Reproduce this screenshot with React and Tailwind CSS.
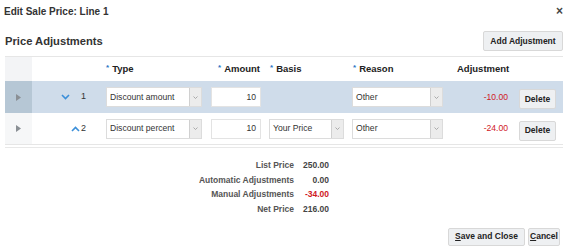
import React from "react";

function Chevron({ dir }) {
    return (
        <svg width="9" height="6" viewBox="0 0 9 6" className="block">
            {dir === "down" ? (
                <path d="M1 1 L4.5 4.5 L8 1" fill="none" stroke="#3b8fd9" strokeWidth="1.6" />
            ) : (
                <path d="M1 5 L4.5 1.5 L8 5" fill="none" stroke="#3b8fd9" strokeWidth="1.6" />
            )}
        </svg>
    );
}

function Select({ value, width }) {
    return (
        <div className={`flex h-[20px] ${width} border border-[#dcdcdc] bg-white`}>
            <div className="flex-1 flex items-center pl-[3px] text-[8.6px] text-[#333]">{value}</div>
            <div className="w-[12px] flex items-center justify-center bg-[#ececec] border-l border-[#d0d0d0]">
                <svg width="5" height="3" viewBox="0 0 5 3">
                    <path d="M0.5 0.5 L2.5 2.5 L4.5 0.5" fill="none" stroke="#999" strokeWidth="0.8" />
                </svg>
            </div>
        </div>
    );
}

function Star() {
    return <span className="text-[#2a74c4] text-[8px] relative -top-[2px] mr-[3px]">*</span>;
}

function DeleteButton() {
    return (
        <button className="h-[20px] w-[37px] rounded-[2px] border border-[#d8d8d8] bg-[#eef0f2] text-[8.5px] font-bold text-[#222]">
            Delete
        </button>
    );
}

function Row({ selected, rowNum, dir, type, basis, adjustment }) {
    return (
        <div className={`flex h-[32px] items-center ${selected ? "bg-[#cfdcea]" : "bg-white border-b border-[#e6e6e6]"}`}>
            <div className={`w-[27px] h-full flex items-center justify-center ${selected ? "bg-[#b6c7d5]" : "bg-[#f6f7f8]"}`}>
                <svg width="5" height="7" viewBox="0 0 5 7">
                    <path d="M0 0 L5 3.5 L0 7 Z" fill="#8a8f94" />
                </svg>
            </div>
            <div className="w-[74px] h-full flex items-center justify-end pr-[20px] gap-[1px] text-[9px] text-[#333]">
                {dir === "down" ? (
                    <>
                        <span className="mr-[10px]"><Chevron dir="down" /></span>
                        <span>{rowNum}</span>
                    </>
                ) : (
                    <>
                        <Chevron dir="up" />
                        <span>{rowNum}</span>
                    </>
                )}
            </div>
            <div className="w-[105px]">
                <Select value={type} width="w-[96px]" />
            </div>
            <div className="w-[58px]">
                <div className="h-[20px] w-[50px] border border-[#e3e3e3] bg-white flex items-center justify-end pr-[4px] text-[8.6px] text-[#333]">
                    10
                </div>
            </div>
            <div className="w-[83px]">
                {basis && <Select value={basis} width="w-[75px]" />}
            </div>
            <div className="w-[100px]">
                <Select value="Other" width="w-[91px]" />
            </div>
            <div className="w-[61px] text-right pr-[5px] text-[8.6px] text-[#d0191f]">{adjustment}</div>
            <div className="w-[50px] pl-[6px]">
                <DeleteButton />
            </div>
        </div>
    );
}

export default function App() {
    const summary = [
        { label: "List Price", value: "250.00" },
        { label: "Automatic Adjustments", value: "0.00" },
        { label: "Manual Adjustments", value: "-34.00", red: true },
        { label: "Net Price", value: "216.00" },
    ];

    return (
        <div className="w-[571px] h-[249px] bg-white font-['Liberation_Sans',Arial,sans-serif] text-[#333] overflow-hidden">
            {/* Title */}
            <div className="h-[22px] flex items-center justify-between pl-[4px] pr-[8px]">
                <span className="text-[10px] font-bold text-[#333]">Edit Sale Price: Line 1</span>
                <span className="text-[12px] font-bold text-[#444] leading-none">×</span>
            </div>

            {/* Section header */}
            <div className="h-[30px] flex items-center justify-between pl-[5px] pr-[8px] pt-[8px]">
                <span className="text-[11.2px] font-bold text-[#333]">Price Adjustments</span>
                <button className="h-[20px] w-[80px] rounded-[2px] border border-[#d8d8d8] bg-[#eef0f2] text-[8.5px] font-bold text-[#222]">
                    Add Adjustment
                </button>
            </div>

            {/* Table */}
            <div className="mt-[4px] ml-[5px] w-[558px] border-t border-[#e6e6e6]">
                <div className="flex h-[24px] items-center text-[9.5px] font-bold text-[#222]">
                    <div className="w-[27px] h-full bg-[#f3f4f6]" />
                    <div className="w-[74px]" />
                    <div className="w-[105px]"><Star />Type</div>
                    <div className="w-[58px] pl-[7px]"><Star />Amount</div>
                    <div className="w-[83px] pl-[1px]"><Star />Basis</div>
                    <div className="w-[100px] pl-[1px]"><Star />Reason</div>
                    <div className="w-[61px] pl-[5px]">Adjustment</div>
                    <div className="w-[50px]" />
                </div>
                <Row selected rowNum="1" dir="down" type="Discount amount" adjustment="-10.00" />
                <Row rowNum="2" dir="up" type="Discount percent" basis="Your Price" adjustment="-24.00" />
                <div className="mt-[2px] border-t border-[#e8e8e8]" />
            </div>

            {/* Summary */}
            <div className="mt-[12px] grid grid-cols-[294px_35px] gap-y-[3.5px] text-[8.5px] font-bold">
                {summary.map((s) => (
                    <React.Fragment key={s.label}>
                        <div className="text-right text-[#555] leading-[11px]">{s.label}</div>
                        <div className={`text-right leading-[11px] ${s.red ? "text-[#d0191f]" : "text-[#444]"}`}>{s.value}</div>
                    </React.Fragment>
                ))}
            </div>

            {/* Footer buttons */}
            <div className="mt-[13px] flex justify-end gap-[3px] pr-[11px]">
                <button className="h-[18px] w-[77px] rounded-[2px] border border-[#d8d8d8] bg-[#eef0f2] text-[8.5px] font-bold text-[#222]">
                    <u>S</u>ave and Close
                </button>
                <button className="h-[18px] w-[32px] rounded-[2px] border border-[#d8d8d8] bg-[#eef0f2] text-[8.5px] font-bold text-[#222]">
                    <u>C</u>ancel
                </button>
            </div>
        </div>
    );
}
